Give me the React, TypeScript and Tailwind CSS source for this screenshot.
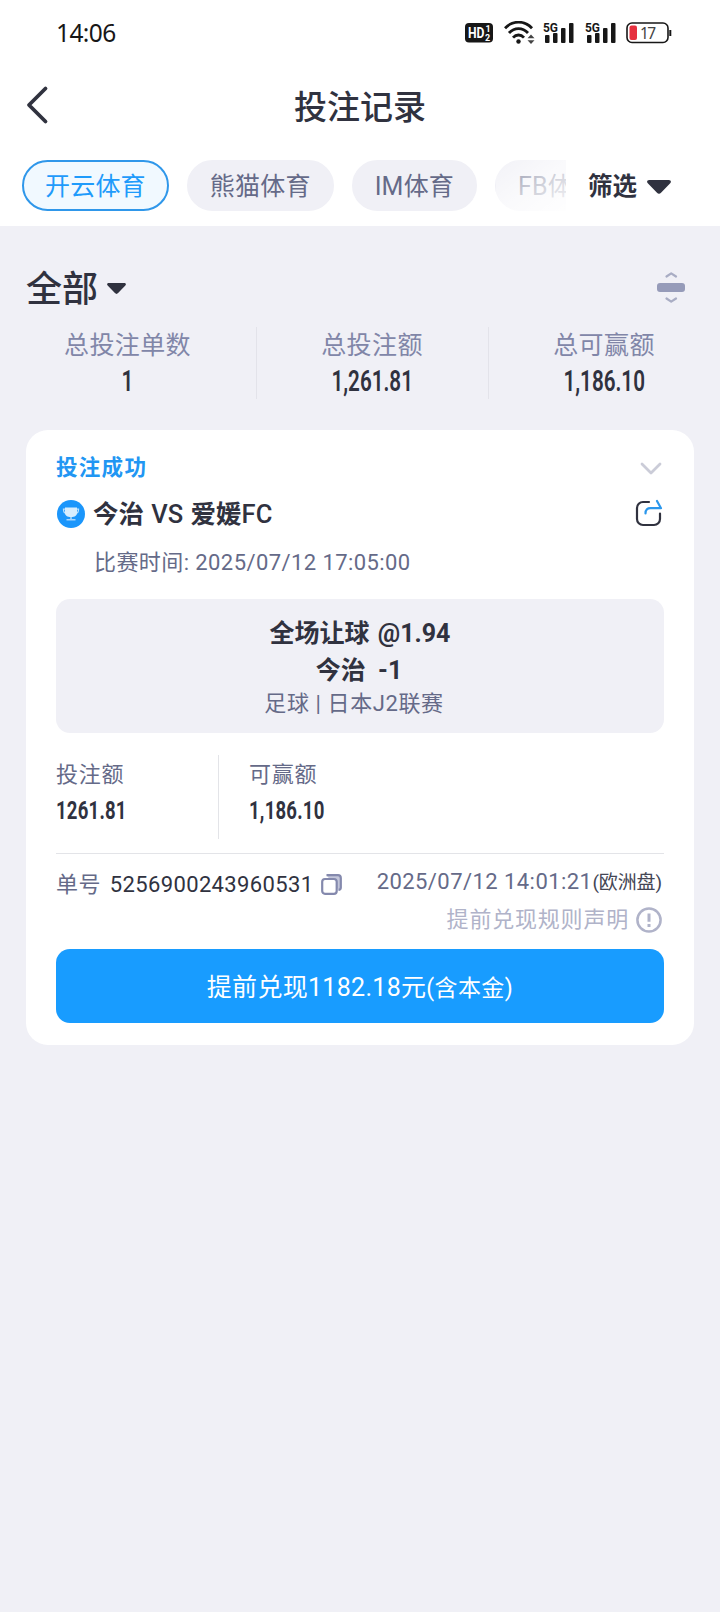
import type { ReactNode } from "react";
import { clsx } from "clsx";

const ROBOTO = "font-[Roboto,'Noto_Sans_CJK_SC',sans-serif]";

interface PillProps {
    label: string;
    active?: boolean;
}

const Pill = ({ label, active }: PillProps) => (
    <button
        className={clsx(
            "h-[51px] shrink-0 rounded-full border-2 px-[21px] text-[25px] leading-[49px] tracking-[0.2px] whitespace-nowrap",
            active
                ? "border-[#2f97ea] bg-[#f1f9ff] text-[#1f9bfb]"
                : "border-[#f0f0f6] bg-[#f0f0f6] text-[#656a88]"
        )}
    >
        {label}
    </button>
);

const Caret = ({ className }: { className: string }) => (
    <svg viewBox="0 0 24 14" preserveAspectRatio="none" className={className} fill="#30323f">
        <path d="M2.2 0h19.6c2 0 2.8 1.8 1.4 3.2L14 12.8c-1.2 1.4-2.8 1.4-4 0L.8 3.2C-.6 1.8.2 0 2.2 0Z" />
    </svg>
);

/* Narrow digits used for the money figures */
const Figure = ({ children, className }: { children: ReactNode; className: string }) => (
    <span className={clsx("inline-block scale-x-70 whitespace-nowrap text-[#30323f]", className)}>{children}</span>
);

const Signal = () => (
    <svg width="32" height="24" viewBox="0 0 32 24" fill="#171717">
        <text x="0" y="10.5" fontSize="13" fontWeight="700" fontFamily="Roboto" textLength="15" lengthAdjust="spacingAndGlyphs">5G</text>
        <rect x="2" y="14" width="4.5" height="8" rx="1" />
        <rect x="10" y="12" width="4.5" height="10" rx="1" />
        <rect x="18" y="7" width="4.5" height="15" rx="1" />
        <rect x="26" y="2" width="4.5" height="20" rx="1" />
    </svg>
);

const StatusBar = () => (
    <div className="flex h-[65px] items-center justify-between pr-[48px] pl-[56px]">
        <span className="pt-px text-[24.5px] leading-none text-[#171717] font-['Noto_Sans',sans-serif] tracking-[-0.6px]">14:06</span>
        <div className="flex items-center">
            <svg width="28" height="20" viewBox="0 0 28 20">
                <rect width="28" height="19.5" rx="4" fill="#171717" />
                <g fill="#fff" fontFamily="Roboto" fontWeight="700">
                    <text x="3" y="15" fontSize="14.5" textLength="16.5" lengthAdjust="spacingAndGlyphs">HD</text>
                    <text x="20.5" y="9" fontSize="9">1</text>
                    <text x="20" y="17.5" fontSize="9">2</text>
                </g>
            </svg>
            <svg width="31" height="24" viewBox="0 0 31 24" className="ml-[11px]" fill="none" stroke="#171717" strokeWidth="2.8">
                <path d="M1 7.2C8.5-.8 20.5-.8 28 7.2" />
                <path d="M5 12c5.5-5.8 13.5-5.8 19 0" />
                <path d="M9 16.6c3.2-3.5 7.8-3.5 11 0" />
                <circle cx="14.5" cy="20.5" r="2.2" fill="#171717" stroke="none" />
                <path d="M23.5 17.2 27 13.5l3.5 3.7ZM23.5 19.3 27 23l3.5-3.7Z" fill="#444" stroke="none" />
            </svg>
            <div className="ml-[8px]"><Signal /></div>
            <div className="ml-[10px]"><Signal /></div>
            <svg width="46" height="22" viewBox="0 0 46 22" className="ml-[9px]">
                <rect x="1" y="1" width="41" height="19.5" rx="5" fill="#fff" stroke="#171717" strokeWidth="1.6" />
                <path d="M44.3 8v6" stroke="#171717" strokeWidth="2" />
                <rect x="3.5" y="3.5" width="7.5" height="14.5" rx="2" fill="#e6303f" />
                <text x="14" y="16.5" fontSize="15.5" fontFamily="Noto Sans" fill="#444" textLength="16">17</text>
            </svg>
        </div>
    </div>
);

const Header = () => (
    <header className="h-[226px] bg-white">
        <StatusBar />
        <div className="grid h-[84px] grid-cols-[1fr_auto_1fr] items-center">
            <svg width="24" height="40" viewBox="0 0 24 40" className="mb-[4px] ml-[25px]" fill="none" stroke="#30323f" strokeWidth="3.8" strokeLinecap="round" strokeLinejoin="round">
                <path d="M20.5 3.5 4 20l16.5 16.5" />
            </svg>
            <h1 className="pt-[2px] text-[33px] leading-[82px] font-medium text-[#30323f]">投注记录</h1>
        </div>
        <div className="mt-[11px] flex h-[51px] items-center pl-[22px]">
            <div className="relative flex w-[544px] gap-[18px] overflow-hidden">
                <Pill label="开云体育" active />
                <Pill label="熊猫体育" />
                <Pill label="IM体育" />
                <Pill label="FB体育" />
                <div className="absolute inset-y-0 right-0 w-[70px] bg-linear-to-br from-white/15 via-white/65 to-white/95"></div>
            </div>
            <span className="ml-[22px] pt-[2px] text-[24.5px] leading-[49px] font-bold text-[#30323f]">筛选</span>
            <Caret className="mt-[3px] ml-[10px] h-[14px] w-[24px]" />
        </div>
    </header>
);

const stats = [
    { label: "总投注单数", value: "1" },
    { label: "总投注额", value: "1,261.81" },
    { label: "总可赢额", value: "1,186.10" },
];

const Summary = () => (
    <section className="pt-[36px]">
        <div className="flex h-[52px] items-center pr-[35px] pl-[26px]">
            <h2 className="pt-[3px] text-[36px] leading-[52px] font-medium text-[#30323f]">全部</h2>
            <Caret className="ml-[9px] h-[11px] w-[19px]" />
            <svg width="28" height="32" viewBox="0 0 28 32" className="ml-auto" fill="none" stroke="#a9adc4" strokeWidth="2.2" strokeLinecap="round" strokeLinejoin="round">
                <path d="m9.5 4.5 4.7-3.2L19 4.500M9.5 26.5l4.7 3.2 4.8-3.2" />
                <rect width="28" height="9" y="11" rx="3" fill="#969bb9" stroke="none" />
            </svg>
        </div>
        <div className="mt-[13px] grid h-[72px] grid-cols-[257px_232px_231px]">
            {stats.map((s) => (
                <div key={s.label} className="flex flex-col items-center border-r border-[#e3e3ea] pr-px last:border-r-0">
                    <span className="text-[25px] leading-[38px] tracking-[0.4px] text-[#8186a8]">{s.label}</span>
                    <Figure className="text-[29.5px] leading-[32px] font-semibold">{s.value}</Figure>
                </div>
            ))}
        </div>
    </section>
);

const BetCard = () => (
    <article className="mx-[26px] mt-[31px] h-[615px] rounded-[22px] bg-white px-[30px]">
        <div className="flex h-[56px] items-end justify-between pr-[2px]">
            <span className="text-[21.5px] leading-[36px] font-bold tracking-[1.3px] text-[#2196f3]">投注成功</span>
            <svg width="22" height="14" viewBox="0 0 22 14" className="mb-[10px]" fill="none" stroke="#cbccd8" strokeWidth="2.8" strokeLinecap="round" strokeLinejoin="round">
                <path d="m2 2 9 9 9-9" />
            </svg>
        </div>

        <div className="flex h-[56px] items-center">
            <svg width="28" height="28" viewBox="0 0 28 28" className="ml-px">
                <circle cx="14" cy="14" r="14" fill="#1b96fb" />
                <path d="M8 9.2H6.5c0 3 .8 4 2.6 4M20 9.2h1.500c0 3-.8 4-2.6 4" fill="none" stroke="#b9e0fd" strokeWidth="1.3" />
                <path d="M8 7.5h12V13c0 2.500-2.200 4-6 4s-6-1.500-6-4Z" fill="#d7edfe" />
                <path d="M13.2 17h1.600v2h3.700v1.500h-9V19h3.700Z" fill="#a9d6fb" />
            </svg>
            <h3 className="ml-[8px] text-[25.5px] leading-[56px] font-medium [word-spacing:1px] text-[#30323f]">
                <span className="font-bold">今治</span> VS <span className="font-bold">爱媛</span>FC
            </h3>
            <svg width="28" height="28" viewBox="0 0 28 28" className="mr-[1px] mb-[2px] ml-auto" fill="none" strokeWidth="2.2" strokeLinecap="round" strokeLinejoin="round">
                <path d="M14 3H8a6 6 0 0 0-6 6v11a6 6 0 0 0 6 6h11a6 6 0 0 0 6-6v-5.5" stroke="#30323f" />
                <path d="M10.500 14.500c0-4 2-5.300 5-5.300H26L22 2" stroke="#2b97ec" />
            </svg>
        </div>
        <p className="h-[57px] pl-[38px] text-[22px] leading-[42px] tracking-[0.42px] text-[#656a88]">比赛时间: 2025/07/12 17:05:00</p>

        <div className="flex h-[134px] flex-col items-center rounded-[14px] bg-[#f0f0f6] pt-[16px] text-[#30323f]">
            <span className="text-[25px] leading-[38px] font-bold [word-spacing:2px]">全场让球 @1.94</span>
            <span className="pr-[2px] text-[25px] leading-[36px] font-bold whitespace-pre">今治  -1</span>
            <span className="pr-[12px] text-[22px] leading-[30px] tracking-[0.6px] text-[#656a88]">足球 | 日本J2联赛</span>
        </div>

        <div className="mt-[22px] flex h-[84px]">
            <div className="flex w-[163px] flex-col items-start border-r border-[#e3e4e8]">
                <span className="text-[22px] leading-[40px] tracking-[0.7px] text-[#656a88]">投注额</span>
                <Figure className="origin-left text-[26.5px] leading-[30px] font-bold tracking-[0.3px]">1261.81</Figure>
            </div>
            <div className="flex flex-col items-start pl-[30px]">
                <span className="text-[22px] leading-[40px] tracking-[0.7px] text-[#656a88]">可赢额</span>
                <Figure className="origin-left text-[26.5px] leading-[30px] font-bold tracking-[0.3px]">1,186.10</Figure>
            </div>
        </div>

        <div className="mt-[14px] flex h-[48px] items-center border-t border-[#e3e4e8]">
            <span className="mt-[14px] text-[22px] leading-[32px] tracking-[0.4px] text-[#656a88]">单号</span>
            <span className="mt-[14px] ml-[9px] text-[22px] leading-[32px] tracking-[0.36px] text-[#30323f]">5256900243960531</span>
            <svg width="21" height="21" viewBox="0 0 21 21" className="mt-[13px] ml-[8px]" fill="none" stroke="#8489ad" strokeWidth="2.2">
                <path d="M5.5 1.2H17A2.8 2.8 0 0 1 19.8 4v9.5c0 1.6-.8 2.3-2.3 2.3" fill="#c3c6da" />
                <rect x="1.2" y="5" width="14.5" height="14.8" rx="2.8" fill="#fff" />
            </svg>
            <span className="mt-[10px] mr-[2px] ml-auto text-[22px] leading-[32px] tracking-[0.44px] whitespace-nowrap text-[#656a88]">
                2025/07/12 14:01:21<span className="text-[19px] tracking-[-0.1px] text-[#444655]">(欧洲盘)</span>
            </span>
        </div>
        <div className="flex h-[48px] items-center justify-end pb-[10px]">
            <span className="text-[22px] leading-[32px] tracking-[0.8px] text-[#b0b3c9]">提前兑现规则声明</span>
            <svg width="26" height="26" viewBox="0 0 26 26" className="mr-[2px] ml-[7px]" fill="none" stroke="#b0b3c9" strokeWidth="2.5">
                <circle cx="13" cy="13" r="11.6" />
                <path d="M13 6.5v8.3M13 17v3" strokeWidth="3" />
            </svg>
        </div>

        <button className="h-[74px] w-full rounded-[14px] bg-[#189cff] pt-[3px] text-[25px] leading-[71px] tracking-[0.3px] text-white">
            提前兑现1182.18元<span className="text-[23px] tracking-[0.4px]">(含本金)</span>
        </button>
    </article>
);

export default function App() {
    return (
        <div className={clsx("min-h-[1612px] w-full bg-[#f0f0f6]", ROBOTO)}>
            <Header />
            <Summary />
            <BetCard />
        </div>
    );
}
